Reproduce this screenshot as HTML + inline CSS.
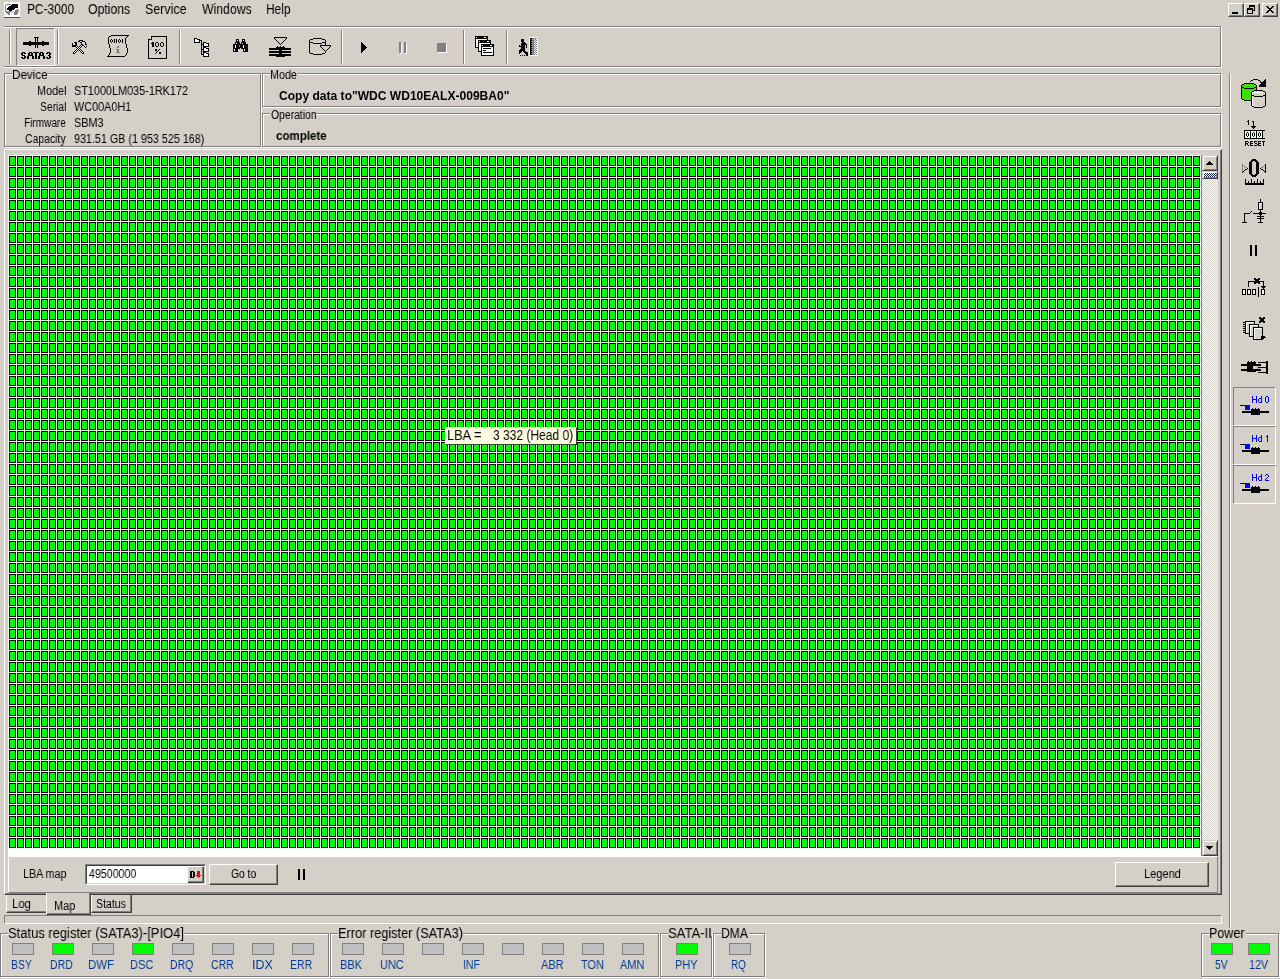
<!DOCTYPE html>
<html><head><meta charset="utf-8"><title>PC-3000</title>
<style>
*{margin:0;padding:0;box-sizing:border-box}
html,body{width:1280px;height:979px;overflow:hidden;background:#D4D0C8;font-family:"Liberation Sans",sans-serif;font-size:12px;color:#000}
.a{position:absolute}
.t{position:absolute;white-space:pre;line-height:1;will-change:transform}
.sep{position:absolute;width:2px;border-left:1px solid #808080;border-right:1px solid #fff}
svg{position:absolute;shape-rendering:crispEdges;overflow:visible}
.led{position:absolute;width:22px;height:12px;border:1px solid #808080;background:#C0C0C0}
.led.on{background:#00FF00}
.btn{border-top:1px solid #fff;border-left:1px solid #fff;border-right:1px solid #404040;border-bottom:1px solid #404040;box-shadow:inset -1px -1px 0 #808080;background:#D4D0C8}
.sbtn{width:16px;height:16px;border-top:1px solid #D4D0C8;border-left:1px solid #D4D0C8;border-right:1px solid #404040;border-bottom:1px solid #404040;box-shadow:inset 1px 1px 0 #fff,inset -1px -1px 0 #808080;background:#D4D0C8}
.tab{border-left:1px solid #fff;border-right:1px solid #404040;border-bottom:1px solid #404040;box-shadow:inset -1px -1px 0 #808080;background:#D4D0C8}
</style></head><body>

<div class="a btn" style="left:1228px;top:3px;width:16px;height:14px"></div>
<div class="a btn" style="left:1244px;top:3px;width:16px;height:14px"></div>
<div class="a btn" style="left:1262px;top:3px;width:16px;height:14px"></div>
<svg style="left:1228px;top:3px" width="16" height="14"><path fill="#000" d="M4 9h6v2h-6z"/></svg>
<svg style="left:1244px;top:3px" width="16" height="14"><path fill="#000" d="M5 2h6v2h-6zM5 4h1v1h-1zM10 4h1v4h-1zM9 7h1v1h-1zM3 5h6v2h-6zM3 7h1v4h-1zM8 7h1v4h-1zM3 10h6v1h-6z"/></svg>
<svg style="left:1262px;top:3px" width="16" height="14"><path fill="#000" d="M4 3h2v1h-2zM10 3h2v1h-2zM5 4h2v1h-2zM9 4h2v1h-2zM6 5h4v1h-4zM7 6h2v1h-2zM6 7h4v1h-4zM5 8h2v1h-2zM9 8h2v1h-2zM4 9h2v1h-2zM10 9h2v1h-2z"/></svg>
<div class="a" style="left:4px;top:26px;width:1217px;height:1px;background:#808080"></div>
<div class="a" style="left:4px;top:27px;width:1218px;height:1px;background:#fff"></div>
<div class="a" style="left:4px;top:66px;width:1217px;height:1px;background:#808080"></div>
<div class="a" style="left:4px;top:67px;width:1218px;height:1px;background:#fff"></div>
<div class="a" style="left:1220px;top:26px;width:1px;height:41px;background:#808080"></div>
<div class="a" style="left:1221px;top:26px;width:1px;height:42px;background:#fff"></div>
<div class="sep" style="left:9px;top:30px;height:34px"></div>
<div class="sep" style="left:57px;top:30px;height:34px"></div>
<div class="sep" style="left:179px;top:30px;height:34px"></div>
<div class="sep" style="left:341px;top:30px;height:34px"></div>
<div class="sep" style="left:463px;top:30px;height:34px"></div>
<div class="sep" style="left:506px;top:30px;height:34px"></div>
<div class="a" style="left:16px;top:28px;width:39px;height:38px;border-top:1px solid #808080;border-left:1px solid #808080;border-right:1px solid #fff;border-bottom:1px solid #fff"></div>
<svg style="left:16px;top:28px" width="39" height="38"><path fill="#000" d="M7 14h26v3h-26zM13 13h2v5h-2zM26 13h2v5h-2zM18 9h5v1h-5zM19 10h1v10h-1zM21 10h1v10h-1z"/></svg>
<div class="a" style="left:5px;top:74px;width:257px;height:74px;border:1px solid #fff"></div><div class="a" style="left:4px;top:73px;width:257px;height:74px;border:1px solid #808080"></div>
<div class="a" style="left:263px;top:74px;width:959px;height:34px;border:1px solid #fff"></div><div class="a" style="left:262px;top:73px;width:959px;height:34px;border:1px solid #808080"></div>
<div class="a" style="left:263px;top:114px;width:959px;height:34px;border:1px solid #fff"></div><div class="a" style="left:262px;top:113px;width:959px;height:34px;border:1px solid #808080"></div>
<div class="a" style="left:6px;top:894px;width:41px;height:19px;border-left:1px solid #fff;border-bottom:1px solid #404040;box-shadow:inset 0 -1px 0 #808080;background:#D4D0C8"></div>
<div class="a tab" style="left:91px;top:894px;width:41px;height:19px"></div>
<div class="a" style="left:4px;top:149px;width:1218px;height:746px;border-top:1px solid #fff;border-left:1px solid #fff;border-right:1px solid #404040;border-bottom:1px solid #404040"></div>
<div class="a" style="left:5px;top:150px;width:1216px;height:744px;border-right:1px solid #808080;border-bottom:1px solid #808080"></div>
<div class="a tab" style="left:46px;top:893px;width:45px;height:22px"></div>
<div class="a" style="left:8px;top:155px;width:1193px;height:701px;background:#fff"></div>
<svg style="left:9px;top:156px" width="1192" height="693"><defs><pattern id="cp" x="0" y="0" width="8" height="11" patternUnits="userSpaceOnUse"><rect x="0" y="0" width="7" height="10" fill="#000"/><rect x="1" y="1" width="5" height="8" fill="#00FF00"/></pattern></defs><rect x="0" y="0" width="1192" height="693" fill="url(#cp)"/></svg>
<div class="a" style="left:445px;top:427px;width:132px;height:18px;background:#FFFFE1;border-top:1px solid #FFF0F0;border-left:1px solid #FFF0F0;border-right:1px solid #404040;border-bottom:1px solid #404040"></div>
<div class="a" style="left:1201px;top:155px;width:1px;height:701px;background:#808080"></div>
<svg style="left:1202px;top:155px" width="16" height="701"><defs><pattern id="ck" x="0" y="0" width="2" height="2" patternUnits="userSpaceOnUse"><rect width="2" height="2" fill="#fff"/><rect x="1" y="0" width="1" height="1" fill="#D4D0C8"/><rect x="0" y="1" width="1" height="1" fill="#D4D0C8"/></pattern><pattern id="ck2" x="0" y="0" width="2" height="2" patternUnits="userSpaceOnUse"><rect width="2" height="2" fill="#fff"/><rect x="1" y="0" width="1" height="1" fill="#0A246A"/><rect x="0" y="1" width="1" height="1" fill="#0A246A"/></pattern></defs><rect width="16" height="701" fill="url(#ck)"/></svg>
<div class="a sbtn" style="left:1202px;top:155px"></div>
<div class="a sbtn" style="left:1202px;top:171px;height:8px"></div>
<svg style="left:1204px;top:173px" width="12" height="4"><rect width="12" height="4" fill="url(#ck2)"/></svg>
<div class="a sbtn" style="left:1202px;top:840px"></div>
<svg style="left:1202px;top:155px" width="16" height="16"><path d="M7 6h1v1h-1zM6 7h3v1h-3zM5 8h5v1h-5zM4 9h7v1h-7z" fill="#000"/></svg>
<svg style="left:1202px;top:840px" width="16" height="16"><path d="M4 6h7v1h-7zM5 7h5v1h-5zM6 8h3v1h-3zM7 9h1v1h-1z" fill="#000"/></svg>
<div class="a" style="left:8px;top:856px;width:1210px;height:37px;border-top:1px solid #fff;border-left:1px solid #fff;border-right:1px solid #808080;border-bottom:1px solid #808080"></div>
<div class="a" style="left:85px;top:864px;width:121px;height:21px;border-top:1px solid #808080;border-left:1px solid #808080;border-right:1px solid #fff;border-bottom:1px solid #fff"></div>
<div class="a" style="left:86px;top:865px;width:119px;height:19px;border-top:1px solid #404040;border-left:1px solid #404040;border-right:1px solid #D4D0C8;border-bottom:1px solid #D4D0C8;background:#fff"></div>
<div class="a" style="left:188px;top:867px;width:16px;height:16px;border-right:1px solid #404040;border-bottom:1px solid #404040;box-shadow:inset -1px -1px 0 #808080;background:#D4D0C8"></div>
<svg style="left:188px;top:867px" width="16" height="16"><path fill="#000" d="M2 4h4v1h-4zM2 5h2v5h-2zM2 10h4v1h-4zM5 5h2v5h-2z"/><path fill="#f00" d="M9 4h3v4h-3zM8 8h5v1h-5zM9 9h3v1h-3zM10 10h1v1h-1z"/></svg>
<div class="a btn" style="left:209px;top:864px;width:69px;height:21px"></div>
<div class="a" style="left:298px;top:869px;width:2px;height:11px;background:#000"></div>
<div class="a" style="left:303px;top:869px;width:2px;height:11px;background:#000"></div>
<div class="a btn" style="left:1115px;top:862px;width:94px;height:25px"></div>
<div class="a" style="left:4px;top:915px;width:1218px;height:9px;border-top:1px solid #808080;border-left:1px solid #808080;border-right:1px solid #fff;border-bottom:1px solid #fff"></div>
<div class="sep" style="left:1229px;top:73px;height:855px"></div>
<div class="a" style="left:1233px;top:387px;width:43px;height:39px;border-top:1px solid #808080;border-left:1px solid #808080;border-right:1px solid #fff;border-bottom:1px solid #fff"></div>
<div class="a" style="left:1233px;top:426px;width:43px;height:39px;border-top:1px solid #808080;border-left:1px solid #808080;border-right:1px solid #fff;border-bottom:1px solid #fff"></div>
<div class="a" style="left:1233px;top:465px;width:43px;height:39px;border-top:1px solid #808080;border-left:1px solid #808080;border-right:1px solid #fff;border-bottom:1px solid #fff"></div>
<div class="a" style="left:1px;top:934px;width:329px;height:44px;border:1px solid #fff"></div><div class="a" style="left:0px;top:933px;width:329px;height:44px;border:1px solid #808080"></div>
<div class="a" style="left:331px;top:934px;width:329px;height:44px;border:1px solid #fff"></div><div class="a" style="left:330px;top:933px;width:329px;height:44px;border:1px solid #808080"></div>
<div class="a" style="left:661px;top:934px;width:52px;height:44px;border:1px solid #fff"></div><div class="a" style="left:660px;top:933px;width:52px;height:44px;border:1px solid #808080"></div>
<div class="a" style="left:714px;top:934px;width:52px;height:44px;border:1px solid #fff"></div><div class="a" style="left:713px;top:933px;width:52px;height:44px;border:1px solid #808080"></div>
<div class="a" style="left:1202px;top:934px;width:78px;height:44px;border:1px solid #fff"></div><div class="a" style="left:1201px;top:933px;width:78px;height:44px;border:1px solid #808080"></div>
<div class="led" style="left:12px;top:943px"></div>
<div class="led on" style="left:52px;top:943px"></div>
<div class="led" style="left:92px;top:943px"></div>
<div class="led on" style="left:132px;top:943px"></div>
<div class="led" style="left:172px;top:943px"></div>
<div class="led" style="left:212px;top:943px"></div>
<div class="led" style="left:252px;top:943px"></div>
<div class="led" style="left:292px;top:943px"></div>
<div class="led" style="left:342px;top:943px"></div>
<div class="led" style="left:382px;top:943px"></div>
<div class="led" style="left:422px;top:943px"></div>
<div class="led" style="left:462px;top:943px"></div>
<div class="led" style="left:502px;top:943px"></div>
<div class="led" style="left:542px;top:943px"></div>
<div class="led" style="left:582px;top:943px"></div>
<div class="led" style="left:622px;top:943px"></div>
<div class="led on" style="left:676px;top:943px"></div>
<div class="led" style="left:729px;top:943px"></div>
<div class="led on" style="left:1211px;top:943px"></div>
<div class="led on" style="left:1248px;top:943px"></div>
<div class="a" style="left:12px;top:72px;width:35px;height:4px;background:#D4D0C8"></div>
<div class="a" style="left:270px;top:72px;width:27px;height:4px;background:#D4D0C8"></div>
<div class="a" style="left:270px;top:112px;width:46px;height:4px;background:#D4D0C8"></div>
<div class="a" style="left:8px;top:932px;width:176px;height:4px;background:#D4D0C8"></div>
<div class="a" style="left:338px;top:932px;width:125px;height:4px;background:#D4D0C8"></div>
<div class="a" style="left:668px;top:932px;width:44px;height:4px;background:#D4D0C8"></div>
<div class="a" style="left:721px;top:932px;width:28px;height:4px;background:#D4D0C8"></div>
<div class="a" style="left:1209px;top:932px;width:37px;height:4px;background:#D4D0C8"></div>
<svg style="left:4px;top:2px" width="16" height="16"><path fill="#fff" d="M0 0h16v1h-16zM0 1h16v1h-16zM0 2h2v1h-2zM7 2h1v1h-1zM14 2h2v1h-2zM0 3h1v1h-1zM2 3h5v1h-5zM14 3h2v1h-2zM0 4h1v1h-1zM2 4h3v1h-3zM14 4h2v1h-2zM0 5h1v1h-1zM2 5h2v1h-2zM14 5h2v1h-2zM0 6h1v1h-1zM2 6h1v1h-1zM11 6h5v1h-5zM0 7h1v1h-1zM2 7h1v1h-1zM10 7h3v1h-3zM15 7h1v1h-1zM0 8h1v1h-1zM2 8h3v1h-3zM8 8h3v1h-3zM14 8h2v1h-2zM0 9h1v1h-1zM10 9h1v1h-1zM15 9h1v1h-1zM0 10h2v1h-2zM6 10h1v1h-1zM9 10h1v1h-1zM14 10h2v1h-2zM0 11h3v1h-3zM6 11h4v1h-4zM14 11h2v1h-2zM0 12h4v1h-4zM6 12h4v1h-4zM13 12h3v1h-3zM0 13h16v1h-16zM0 14h16v1h-16z"/><path fill="#808080" d="M2 2h5v1h-5zM1 3h1v1h-1zM1 4h1v1h-1zM1 5h1v1h-1zM1 6h1v1h-1zM1 7h1v1h-1zM13 7h2v1h-2zM1 8h1v1h-1zM11 8h3v1h-3zM1 9h6v1h-6zM11 9h4v1h-4zM2 10h4v1h-4zM10 10h4v1h-4zM3 11h3v1h-3zM10 11h4v1h-4zM4 12h2v1h-2zM10 12h3v1h-3z"/><path fill="#000" d="M8 2h6v1h-6zM7 3h7v1h-7zM5 4h9v1h-9zM4 5h10v1h-10zM3 6h8v1h-8zM3 7h7v1h-7zM5 8h3v1h-3z"/><path fill="#c0c0c0" d="M7 9h3v1h-3zM7 10h2v1h-2z"/><path fill="#ff0000" d="M0 15h16v1h-16z"/></svg>
<svg style="left:70px;top:38px" width="20" height="16"><path fill="#000" d="M9 2h4v1h-4zM8 3h2v1h-2zM12 3h3v1h-3zM4 4h3v1h-3zM10 4h2v1h-2zM15 4h1v1h-1zM2 5h1v1h-1zM5 5h2v1h-2zM11 5h1v1h-1zM15 5h1v1h-1zM2 6h1v1h-1zM5 6h2v1h-2zM11 6h2v1h-2zM15 6h2v1h-2zM2 7h5v1h-5zM10 7h1v1h-1zM12 7h2v1h-2zM2 8h4v1h-4zM7 8h1v1h-1zM9 8h1v1h-1zM11 8h1v1h-1zM14 8h1v1h-1zM16 8h1v1h-1zM6 9h1v1h-1zM8 9h1v1h-1zM10 9h1v1h-1zM15 9h1v1h-1zM7 10h1v1h-1zM9 10h1v1h-1zM6 11h1v1h-1zM8 11h1v1h-1zM10 11h1v1h-1zM5 12h1v1h-1zM7 12h1v1h-1zM9 12h1v1h-1zM11 12h1v1h-1zM4 13h1v1h-1zM6 13h1v1h-1zM10 13h1v1h-1zM12 13h1v1h-1zM3 14h1v1h-1zM5 14h1v1h-1zM11 14h1v1h-1zM13 14h1v1h-1zM3 15h2v1h-2zM12 15h2v1h-2z"/><path fill="#D4D0C8" d="M10 3h2v1h-2zM12 4h1v1h-1zM14 4h1v1h-1zM13 5h1v1h-1zM13 6h2v1h-2zM11 7h1v1h-1z"/><path fill="#fff" d="M13 4h1v1h-1zM4 5h1v1h-1zM12 5h1v1h-1zM6 8h1v1h-1zM10 8h1v1h-1zM7 9h1v1h-1zM9 9h1v1h-1zM8 10h1v1h-1zM7 11h1v1h-1zM9 11h1v1h-1zM6 12h1v1h-1zM10 12h1v1h-1zM5 13h1v1h-1zM11 13h1v1h-1zM4 14h1v1h-1zM12 14h1v1h-1z"/></svg>
<svg style="left:104px;top:32px" width="26" height="25"><path fill="#000" d="M7 3h18v1h-18zM5 4h2v1h-2zM23 4h1v1h-1zM4 5h1v1h-1zM22 5h1v1h-1zM4 6h1v1h-1zM21 6h1v1h-1zM4 7h1v1h-1zM7 7h1v1h-1zM10 7h1v1h-1zM12 7h1v1h-1zM15 7h1v1h-1zM18 7h1v1h-1zM21 7h1v1h-1zM4 8h1v1h-1zM6 8h1v1h-1zM8 8h1v1h-1zM10 8h1v1h-1zM12 8h1v1h-1zM14 8h1v1h-1zM16 8h1v1h-1zM18 8h1v1h-1zM21 8h1v1h-1zM4 9h1v1h-1zM6 9h1v1h-1zM8 9h1v1h-1zM10 9h1v1h-1zM12 9h1v1h-1zM14 9h1v1h-1zM16 9h1v1h-1zM18 9h1v1h-1zM21 9h1v1h-1zM4 10h1v1h-1zM7 10h1v1h-1zM10 10h1v1h-1zM12 10h1v1h-1zM15 10h1v1h-1zM18 10h1v1h-1zM21 10h1v1h-1zM4 11h1v1h-1zM21 11h1v1h-1zM5 12h1v1h-1zM22 12h1v1h-1zM5 13h1v1h-1zM22 13h1v1h-1zM5 14h1v1h-1zM22 14h1v1h-1zM5 15h1v1h-1zM22 15h1v1h-1zM6 16h1v1h-1zM23 16h1v1h-1zM6 17h1v1h-1zM23 17h1v1h-1zM6 18h1v1h-1zM23 18h1v1h-1zM6 19h1v1h-1zM23 19h1v1h-1zM6 20h1v1h-1zM23 20h1v1h-1zM5 21h1v1h-1zM22 21h1v1h-1zM5 22h1v1h-1zM22 22h1v1h-1zM4 23h1v1h-1zM21 23h1v1h-1zM3 24h18v1h-18z"/><path fill="#808080" d="M13 14h2v1h-2zM13 15h2v1h-2zM12 17h3v1h-3zM13 18h2v1h-2zM13 19h2v1h-2zM12 20h4v1h-4z"/></svg>
<svg style="left:144px;top:33px" width="23" height="26"><path fill="#000" d="M7 3h16v1h-16zM7 4h1v1h-1zM22 4h1v1h-1zM7 5h1v1h-1zM22 5h1v1h-1zM4 6h4v1h-4zM22 6h1v1h-1zM4 7h1v1h-1zM22 7h1v1h-1zM4 8h1v1h-1zM22 8h1v1h-1zM4 9h1v1h-1zM8 9h2v1h-2zM12 9h2v1h-2zM17 9h2v1h-2zM22 9h1v1h-1zM4 10h1v1h-1zM7 10h3v1h-3zM11 10h1v1h-1zM14 10h1v1h-1zM16 10h1v1h-1zM19 10h1v1h-1zM22 10h1v1h-1zM4 11h1v1h-1zM8 11h2v1h-2zM11 11h1v1h-1zM14 11h1v1h-1zM16 11h1v1h-1zM19 11h1v1h-1zM22 11h1v1h-1zM4 12h1v1h-1zM8 12h2v1h-2zM11 12h1v1h-1zM14 12h1v1h-1zM16 12h1v1h-1zM19 12h1v1h-1zM22 12h1v1h-1zM4 13h1v1h-1zM8 13h2v1h-2zM12 13h2v1h-2zM17 13h2v1h-2zM22 13h1v1h-1zM4 14h1v1h-1zM22 14h1v1h-1zM4 15h1v1h-1zM22 15h1v1h-1zM4 16h1v1h-1zM11 16h2v1h-2zM15 16h1v1h-1zM22 16h1v1h-1zM4 17h1v1h-1zM11 17h2v1h-2zM14 17h1v1h-1zM22 17h1v1h-1zM4 18h1v1h-1zM13 18h1v1h-1zM22 18h1v1h-1zM4 19h1v1h-1zM12 19h1v1h-1zM15 19h2v1h-2zM22 19h1v1h-1zM4 20h1v1h-1zM11 20h1v1h-1zM15 20h2v1h-2zM22 20h1v1h-1zM4 21h1v1h-1zM22 21h1v1h-1zM4 22h1v1h-1zM22 22h1v1h-1zM4 23h1v1h-1zM22 23h1v1h-1zM4 24h1v1h-1zM22 24h1v1h-1zM4 25h19v1h-19z"/><path fill="#fff" d="M6 4h1v1h-1zM6 5h1v1h-1z"/><path fill="#808080" d="M5 5h1v1h-1z"/></svg>
<svg style="left:190px;top:35px" width="20" height="22"><path fill="#000" d="M4 3h3v1h-3zM4 4h1v1h-1zM7 4h3v1h-3zM4 5h1v1h-1zM9 5h3v1h-3zM4 6h1v1h-1zM9 6h1v1h-1zM11 6h1v1h-1zM4 7h6v1h-6zM11 7h1v1h-1zM13 7h3v1h-3zM11 8h1v1h-1zM13 8h1v1h-1zM16 8h3v1h-3zM11 9h3v1h-3zM18 9h1v1h-1zM11 10h1v1h-1zM13 10h1v1h-1zM18 10h1v1h-1zM11 11h1v1h-1zM13 11h6v1h-6zM11 12h1v1h-1zM13 12h3v1h-3zM11 13h1v1h-1zM13 13h1v1h-1zM16 13h3v1h-3zM11 14h3v1h-3zM18 14h1v1h-1zM11 15h1v1h-1zM13 15h1v1h-1zM18 15h1v1h-1zM11 16h1v1h-1zM13 16h6v1h-6zM11 17h1v1h-1zM13 17h3v1h-3zM11 18h1v1h-1zM13 18h1v1h-1zM16 18h3v1h-3zM11 19h3v1h-3zM18 19h1v1h-1zM13 20h1v1h-1zM18 20h1v1h-1zM13 21h6v1h-6z"/><path fill="#fff" d="M5 4h2v1h-2zM5 5h4v1h-4zM5 6h4v1h-4zM14 8h2v1h-2zM14 9h4v1h-4zM14 10h4v1h-4zM14 13h2v1h-2zM14 14h4v1h-4zM14 15h4v1h-4zM14 18h2v1h-2zM14 19h4v1h-4zM14 20h4v1h-4z"/></svg>
<svg style="left:228px;top:34px" width="20" height="18"><path fill="#000" d="M8 5h3v1h-3zM14 5h3v1h-3zM8 6h1v1h-1zM10 6h1v1h-1zM14 6h1v1h-1zM16 6h1v1h-1zM8 7h3v1h-3zM14 7h3v1h-3zM7 8h5v1h-5zM13 8h5v1h-5zM7 9h1v1h-1zM9 9h3v1h-3zM13 9h1v1h-1zM15 9h3v1h-3zM5 10h15v1h-15zM5 11h2v1h-2zM8 11h3v1h-3zM12 11h3v1h-3zM16 11h4v1h-4zM5 12h2v1h-2zM8 12h3v1h-3zM12 12h3v1h-3zM16 12h4v1h-4zM5 13h2v1h-2zM8 13h7v1h-7zM16 13h4v1h-4zM5 14h7v1h-7zM13 14h7v1h-7zM5 15h1v1h-1zM7 15h3v1h-3zM15 15h1v1h-1zM17 15h3v1h-3zM5 16h1v1h-1zM7 16h3v1h-3zM15 16h1v1h-1zM17 16h3v1h-3zM5 17h5v1h-5zM15 17h5v1h-5z"/><path fill="#fff" d="M9 6h1v1h-1zM15 6h1v1h-1zM8 9h1v1h-1zM14 9h1v1h-1zM7 11h1v1h-1zM15 11h1v1h-1zM7 12h1v1h-1zM15 12h1v1h-1zM7 13h1v1h-1zM15 13h1v1h-1zM6 15h1v1h-1zM16 15h1v1h-1zM6 16h1v1h-1zM16 16h1v1h-1z"/><path fill="#808080" d="M11 11h1v1h-1zM11 12h1v1h-1z"/></svg>
<svg style="left:266px;top:34px" width="27" height="23"><path fill="#000" d="M8 3h13v1h-13zM8 4h1v1h-1zM20 4h1v1h-1zM9 5h1v1h-1zM19 5h1v1h-1zM10 6h1v1h-1zM18 6h1v1h-1zM11 7h1v1h-1zM17 7h1v1h-1zM12 8h1v1h-1zM16 8h1v1h-1zM13 9h1v1h-1zM15 9h1v1h-1zM14 10h1v1h-1zM11 12h1v1h-1zM14 12h1v1h-1zM17 12h1v1h-1zM10 13h9v1h-9zM3 14h22v1h-22zM3 15h22v1h-22zM13 16h3v1h-3zM3 17h22v1h-22zM3 18h22v1h-22zM13 19h3v1h-3zM3 20h22v1h-22zM3 21h22v1h-22zM10 22h9v1h-9z"/></svg>
<svg style="left:305px;top:34px" width="26" height="21"><path fill="#000" d="M8 4h9v1h-9zM5 5h3v1h-3zM17 5h3v1h-3zM4 6h1v1h-1zM20 6h1v1h-1zM4 7h1v1h-1zM20 7h1v1h-1zM4 8h4v1h-4zM17 8h4v1h-4zM4 9h1v1h-1zM8 9h9v1h-9zM20 9h1v1h-1zM4 10h1v1h-1zM20 10h1v1h-1zM4 11h1v1h-1zM15 11h11v1h-11zM4 12h1v1h-1zM15 12h1v1h-1zM25 12h1v1h-1zM4 13h1v1h-1zM16 13h1v1h-1zM24 13h1v1h-1zM4 14h1v1h-1zM17 14h1v1h-1zM23 14h1v1h-1zM4 15h1v1h-1zM18 15h1v1h-1zM22 15h1v1h-1zM4 16h1v1h-1zM19 16h1v1h-1zM21 16h1v1h-1zM4 17h1v1h-1zM20 17h1v1h-1zM4 18h1v1h-1zM20 18h1v1h-1zM5 19h3v1h-3zM17 19h3v1h-3zM8 20h9v1h-9z"/></svg>
<svg style="left:356px;top:42px" width="11" height="11"><path fill="#000" d="M5 0h1v1h-1zM5 1h2v1h-2zM5 2h3v1h-3zM5 3h4v1h-4zM5 4h5v1h-5zM5 5h6v1h-6zM5 6h5v1h-5zM5 7h4v1h-4zM5 8h3v1h-3zM5 9h2v1h-2zM5 10h1v1h-1z"/></svg>
<svg style="left:394px;top:38px" width="13" height="16"><path fill="#808080" d="M5 4h2v1h-2zM10 4h2v1h-2zM5 5h2v1h-2zM10 5h2v1h-2zM5 6h2v1h-2zM10 6h2v1h-2zM5 7h2v1h-2zM10 7h2v1h-2zM5 8h2v1h-2zM10 8h2v1h-2zM5 9h2v1h-2zM10 9h2v1h-2zM5 10h2v1h-2zM10 10h2v1h-2zM5 11h2v1h-2zM10 11h2v1h-2zM5 12h2v1h-2zM10 12h2v1h-2zM5 13h2v1h-2zM10 13h2v1h-2zM5 14h2v1h-2zM10 14h2v1h-2z"/><path fill="#fff" d="M7 5h1v1h-1zM12 5h1v1h-1zM7 6h1v1h-1zM12 6h1v1h-1zM7 7h1v1h-1zM12 7h1v1h-1zM7 8h1v1h-1zM12 8h1v1h-1zM7 9h1v1h-1zM12 9h1v1h-1zM7 10h1v1h-1zM12 10h1v1h-1zM7 11h1v1h-1zM12 11h1v1h-1zM7 12h1v1h-1zM12 12h1v1h-1zM7 13h1v1h-1zM12 13h1v1h-1zM7 14h1v1h-1zM12 14h1v1h-1zM6 15h2v1h-2zM11 15h2v1h-2z"/></svg>
<svg style="left:432px;top:38px" width="15" height="15"><path fill="#808080" d="M5 5h9v1h-9zM5 6h9v1h-9zM5 7h9v1h-9zM5 8h9v1h-9zM5 9h9v1h-9zM5 10h9v1h-9zM5 11h9v1h-9zM5 12h9v1h-9zM5 13h9v1h-9z"/><path fill="#fff" d="M14 6h1v1h-1zM14 7h1v1h-1zM14 8h1v1h-1zM14 9h1v1h-1zM14 10h1v1h-1zM14 11h1v1h-1zM14 12h1v1h-1zM14 13h1v1h-1zM6 14h9v1h-9z"/></svg>
<svg style="left:472px;top:33px" width="24" height="24"><path fill="#000" d="M3 3h13v1h-13zM3 4h1v1h-1zM5 4h7v1h-7zM14 4h2v1h-2zM3 5h13v1h-13zM3 6h1v1h-1zM15 6h1v1h-1zM3 7h1v1h-1zM6 7h13v1h-13zM3 8h1v1h-1zM6 8h1v1h-1zM8 8h7v1h-7zM17 8h2v1h-2zM3 9h1v1h-1zM6 9h13v1h-13zM3 10h1v1h-1zM6 10h1v1h-1zM18 10h1v1h-1zM3 11h1v1h-1zM6 11h1v1h-1zM9 11h13v1h-13zM3 12h1v1h-1zM6 12h1v1h-1zM9 12h1v1h-1zM11 12h7v1h-7zM20 12h2v1h-2zM3 13h1v1h-1zM6 13h1v1h-1zM9 13h13v1h-13zM3 14h4v1h-4zM9 14h1v1h-1zM21 14h1v1h-1zM6 15h1v1h-1zM9 15h1v1h-1zM11 15h8v1h-8zM21 15h1v1h-1zM6 16h1v1h-1zM9 16h1v1h-1zM21 16h1v1h-1zM6 17h1v1h-1zM9 17h1v1h-1zM11 17h3v1h-3zM21 17h1v1h-1zM6 18h4v1h-4zM21 18h1v1h-1zM9 19h1v1h-1zM11 19h9v1h-9zM21 19h1v1h-1zM9 20h1v1h-1zM21 20h1v1h-1zM9 21h1v1h-1zM21 21h1v1h-1zM9 22h13v1h-13z"/><path fill="#fff" d="M4 4h1v1h-1zM12 4h2v1h-2zM4 6h11v1h-11zM4 7h2v1h-2zM4 8h2v1h-2zM7 8h1v1h-1zM15 8h2v1h-2zM4 9h2v1h-2zM4 10h2v1h-2zM7 10h11v1h-11zM4 11h2v1h-2zM7 11h2v1h-2zM4 12h2v1h-2zM7 12h2v1h-2zM10 12h1v1h-1zM18 12h2v1h-2zM4 13h2v1h-2zM7 13h2v1h-2zM7 14h2v1h-2zM10 14h11v1h-11zM7 15h2v1h-2zM10 15h1v1h-1zM19 15h2v1h-2zM7 16h2v1h-2zM10 16h11v1h-11zM7 17h2v1h-2zM10 17h1v1h-1zM14 17h7v1h-7zM10 18h11v1h-11zM10 19h1v1h-1zM20 19h1v1h-1zM10 20h11v1h-11zM10 21h11v1h-11z"/></svg>
<svg style="left:514px;top:33px" width="25" height="23"><path fill="#fff" d="M15 4h9v1h-9zM15 5h1v1h-1zM23 5h1v1h-1zM15 6h1v1h-1zM20 6h1v1h-1zM22 6h2v1h-2zM15 7h1v1h-1zM21 7h1v1h-1zM23 7h1v1h-1zM15 8h1v1h-1zM20 8h1v1h-1zM22 8h2v1h-2zM15 9h1v1h-1zM21 9h1v1h-1zM23 9h1v1h-1zM15 10h1v1h-1zM20 10h1v1h-1zM22 10h2v1h-2zM15 11h1v1h-1zM21 11h1v1h-1zM23 11h1v1h-1zM15 12h1v1h-1zM20 12h1v1h-1zM22 12h2v1h-2zM15 13h1v1h-1zM21 13h1v1h-1zM23 13h1v1h-1zM15 14h1v1h-1zM20 14h1v1h-1zM22 14h2v1h-2zM15 15h1v1h-1zM21 15h1v1h-1zM23 15h1v1h-1zM15 16h1v1h-1zM20 16h1v1h-1zM22 16h2v1h-2zM15 17h1v1h-1zM21 17h1v1h-1zM23 17h1v1h-1zM15 18h1v1h-1zM20 18h1v1h-1zM22 18h2v1h-2zM15 19h1v1h-1zM21 19h1v1h-1zM23 19h1v1h-1zM15 20h1v1h-1zM20 20h1v1h-1zM22 20h2v1h-2zM15 21h1v1h-1zM21 21h1v1h-1zM23 21h1v1h-1zM15 22h9v1h-9z"/><path fill="#000" d="M16 5h2v1h-2zM7 6h3v1h-3zM16 6h1v1h-1zM7 7h3v1h-3zM16 7h2v1h-2zM7 8h3v1h-3zM16 8h1v1h-1zM8 9h3v1h-3zM16 9h2v1h-2zM7 10h5v1h-5zM16 10h1v1h-1zM7 11h6v1h-6zM16 11h2v1h-2zM5 12h1v1h-1zM7 12h4v1h-4zM12 12h1v1h-1zM16 12h1v1h-1zM5 13h6v1h-6zM12 13h1v1h-1zM16 13h2v1h-2zM7 14h4v1h-4zM12 14h1v1h-1zM16 14h1v1h-1zM7 15h4v1h-4zM16 15h2v1h-2zM6 16h5v1h-5zM16 16h1v1h-1zM5 17h6v1h-6zM16 17h2v1h-2zM5 18h3v1h-3zM9 18h3v1h-3zM16 18h1v1h-1zM5 19h2v1h-2zM10 19h4v1h-4zM16 19h2v1h-2zM5 20h1v1h-1zM11 20h3v1h-3zM16 20h1v1h-1zM12 21h2v1h-2zM16 21h2v1h-2zM6 22h1v1h-1zM8 22h1v1h-1zM10 22h1v1h-1zM12 22h2v1h-2z"/><path fill="#808080" d="M18 5h5v1h-5zM17 6h3v1h-3zM21 6h1v1h-1zM18 7h3v1h-3zM22 7h1v1h-1zM17 8h3v1h-3zM21 8h1v1h-1zM18 9h3v1h-3zM22 9h1v1h-1zM17 10h3v1h-3zM21 10h1v1h-1zM18 11h3v1h-3zM22 11h1v1h-1zM17 12h3v1h-3zM21 12h1v1h-1zM18 13h3v1h-3zM22 13h1v1h-1zM17 14h3v1h-3zM21 14h1v1h-1zM18 15h3v1h-3zM22 15h1v1h-1zM17 16h3v1h-3zM21 16h1v1h-1zM18 17h3v1h-3zM22 17h1v1h-1zM17 18h3v1h-3zM21 18h1v1h-1zM18 19h3v1h-3zM22 19h1v1h-1zM17 20h3v1h-3zM21 20h1v1h-1zM18 21h3v1h-3zM22 21h1v1h-1z"/></svg>
<svg style="left:1238px;top:76px" width="32" height="32"><path fill="#000" d="M15 3h5v1h-5zM27 3h1v1h-1zM13 4h2v1h-2zM20 4h2v1h-2zM26 4h2v1h-2zM12 5h1v1h-1zM22 5h1v1h-1zM25 5h3v1h-3zM22 6h6v1h-6zM6 7h10v1h-10zM23 7h5v1h-5zM4 8h2v1h-2zM16 8h2v1h-2zM22 8h6v1h-6zM3 9h1v1h-1zM18 9h1v1h-1zM21 9h7v1h-7zM3 10h1v1h-1zM18 10h1v1h-1zM21 10h7v1h-7zM3 11h3v1h-3zM16 11h3v1h-3zM3 12h1v1h-1zM6 12h10v1h-10zM18 12h1v1h-1zM3 13h1v1h-1zM18 13h1v1h-1zM3 14h1v1h-1zM16 14h9v1h-9zM3 15h1v1h-1zM14 15h2v1h-2zM25 15h2v1h-2zM3 16h1v1h-1zM13 16h1v1h-1zM27 16h1v1h-1zM3 17h1v1h-1zM13 17h1v1h-1zM27 17h1v1h-1zM3 18h1v1h-1zM13 18h1v1h-1zM27 18h1v1h-1zM3 19h1v1h-1zM13 19h3v1h-3zM25 19h3v1h-3zM3 20h1v1h-1zM13 20h1v1h-1zM16 20h9v1h-9zM27 20h1v1h-1zM3 21h1v1h-1zM13 21h1v1h-1zM27 21h1v1h-1zM3 22h1v1h-1zM13 22h1v1h-1zM27 22h1v1h-1zM4 23h2v1h-2zM13 23h1v1h-1zM27 23h1v1h-1zM6 24h8v1h-8zM27 24h1v1h-1zM13 25h1v1h-1zM27 25h1v1h-1zM13 26h1v1h-1zM27 26h1v1h-1zM13 27h1v1h-1zM27 27h1v1h-1zM13 28h1v1h-1zM27 28h1v1h-1zM13 29h1v1h-1zM27 29h1v1h-1zM14 30h2v1h-2zM25 30h2v1h-2zM16 31h9v1h-9z"/><path fill="#3CE000" d="M6 8h10v1h-10zM4 9h14v1h-14zM4 10h14v1h-14zM6 11h10v1h-10zM4 12h2v1h-2zM16 12h2v1h-2zM4 13h14v1h-14zM4 14h12v1h-12zM4 15h10v1h-10zM4 16h9v1h-9zM4 17h9v1h-9zM4 18h9v1h-9zM4 19h9v1h-9zM4 20h9v1h-9zM4 21h9v1h-9zM4 22h9v1h-9zM6 23h7v1h-7z"/><path fill="#D4D0C8" d="M16 15h9v1h-9zM25 16h2v1h-2zM15 17h12v1h-12zM15 18h12v1h-12zM16 19h9v1h-9zM15 20h1v1h-1zM25 20h2v1h-2zM15 21h12v1h-12zM15 22h12v1h-12zM15 23h12v1h-12zM15 24h12v1h-12zM15 25h12v1h-12zM15 26h12v1h-12zM15 27h12v1h-12zM15 28h12v1h-12zM16 29h11v1h-11zM16 30h9v1h-9z"/><path fill="#fff" d="M14 16h11v1h-11zM14 17h1v1h-1zM14 18h1v1h-1zM14 20h1v1h-1zM14 21h1v1h-1zM14 22h1v1h-1zM14 23h1v1h-1zM14 24h1v1h-1zM14 25h1v1h-1zM14 26h1v1h-1zM14 27h1v1h-1zM14 28h1v1h-1zM14 29h2v1h-2z"/></svg>
<svg style="left:1240px;top:117px" width="26" height="29"><path fill="#000" d="M8 3h1v1h-1zM7 4h2v1h-2zM12 4h2v1h-2zM8 5h1v1h-1zM13 5h1v1h-1zM8 6h1v1h-1zM13 6h1v1h-1zM8 7h1v1h-1zM13 7h1v1h-1zM13 8h1v1h-1zM11 9h5v1h-5zM12 10h3v1h-3zM13 11h1v1h-1zM4 13h21v1h-21zM4 14h1v1h-1zM10 14h1v1h-1zM16 14h1v1h-1zM22 14h1v1h-1zM4 15h1v1h-1zM7 15h1v1h-1zM10 15h1v1h-1zM13 15h1v1h-1zM16 15h1v1h-1zM19 15h1v1h-1zM22 15h1v1h-1zM4 16h1v1h-1zM6 16h1v1h-1zM8 16h1v1h-1zM10 16h1v1h-1zM12 16h1v1h-1zM14 16h1v1h-1zM16 16h1v1h-1zM18 16h1v1h-1zM20 16h1v1h-1zM22 16h1v1h-1zM4 17h1v1h-1zM6 17h1v1h-1zM8 17h1v1h-1zM10 17h1v1h-1zM12 17h1v1h-1zM14 17h1v1h-1zM16 17h1v1h-1zM18 17h1v1h-1zM20 17h1v1h-1zM22 17h1v1h-1zM4 18h1v1h-1zM6 18h1v1h-1zM8 18h1v1h-1zM10 18h1v1h-1zM12 18h1v1h-1zM14 18h1v1h-1zM16 18h1v1h-1zM18 18h1v1h-1zM20 18h1v1h-1zM22 18h1v1h-1zM4 19h1v1h-1zM7 19h1v1h-1zM10 19h1v1h-1zM13 19h1v1h-1zM16 19h1v1h-1zM19 19h1v1h-1zM22 19h1v1h-1zM4 20h1v1h-1zM10 20h1v1h-1zM16 20h1v1h-1zM22 20h1v1h-1zM4 21h21v1h-21zM5 24h3v1h-3zM10 24h3v1h-3zM14 24h3v1h-3zM18 24h3v1h-3zM22 24h3v1h-3zM5 25h1v1h-1zM8 25h1v1h-1zM10 25h1v1h-1zM14 25h1v1h-1zM18 25h1v1h-1zM23 25h1v1h-1zM5 26h3v1h-3zM10 26h3v1h-3zM15 26h2v1h-2zM18 26h3v1h-3zM23 26h1v1h-1zM5 27h1v1h-1zM7 27h1v1h-1zM10 27h1v1h-1zM17 27h2v1h-2zM23 27h1v1h-1zM5 28h1v1h-1zM8 28h1v1h-1zM10 28h3v1h-3zM14 28h3v1h-3zM18 28h3v1h-3zM23 28h1v1h-1z"/><path fill="#fff" d="M5 14h5v1h-5zM11 14h5v1h-5zM17 14h5v1h-5zM5 15h2v1h-2zM8 15h2v1h-2zM11 15h2v1h-2zM14 15h2v1h-2zM17 15h2v1h-2zM20 15h2v1h-2zM5 16h1v1h-1zM7 16h1v1h-1zM9 16h1v1h-1zM11 16h1v1h-1zM13 16h1v1h-1zM15 16h1v1h-1zM17 16h1v1h-1zM19 16h1v1h-1zM21 16h1v1h-1zM5 17h1v1h-1zM7 17h1v1h-1zM9 17h1v1h-1zM11 17h1v1h-1zM13 17h1v1h-1zM15 17h1v1h-1zM17 17h1v1h-1zM19 17h1v1h-1zM21 17h1v1h-1zM5 18h1v1h-1zM7 18h1v1h-1zM9 18h1v1h-1zM11 18h1v1h-1zM13 18h1v1h-1zM15 18h1v1h-1zM17 18h1v1h-1zM19 18h1v1h-1zM21 18h1v1h-1zM5 19h2v1h-2zM8 19h2v1h-2zM11 19h2v1h-2zM14 19h2v1h-2zM17 19h2v1h-2zM20 19h2v1h-2zM5 20h5v1h-5zM11 20h5v1h-5zM17 20h5v1h-5z"/></svg>
<svg style="left:1238px;top:155px" width="32" height="30"><path fill="#000" d="M14 4h4v1h-4zM13 5h6v1h-6zM12 6h3v1h-3zM17 6h3v1h-3zM11 7h3v1h-3zM18 7h3v1h-3zM11 8h3v1h-3zM18 8h3v1h-3zM11 9h3v1h-3zM18 9h3v1h-3zM27 9h1v1h-1zM11 10h3v1h-3zM18 10h3v1h-3zM27 10h1v1h-1zM11 11h3v1h-3zM18 11h3v1h-3zM27 11h1v1h-1zM11 12h3v1h-3zM18 12h3v1h-3zM27 12h1v1h-1zM9 13h1v1h-1zM11 13h3v1h-3zM18 13h3v1h-3zM22 13h1v1h-1zM27 13h1v1h-1zM7 14h2v1h-2zM11 14h3v1h-3zM18 14h3v1h-3zM23 14h2v1h-2zM27 14h1v1h-1zM6 15h1v1h-1zM11 15h3v1h-3zM18 15h3v1h-3zM25 15h1v1h-1zM27 15h1v1h-1zM5 16h1v1h-1zM11 16h3v1h-3zM18 16h3v1h-3zM26 16h2v1h-2zM4 17h1v1h-1zM11 17h3v1h-3zM18 17h3v1h-3zM27 17h1v1h-1zM11 18h3v1h-3zM18 18h3v1h-3zM12 19h3v1h-3zM17 19h3v1h-3zM13 20h6v1h-6zM14 21h4v1h-4zM7 24h1v1h-1zM13 24h1v1h-1zM19 24h1v1h-1zM25 24h1v1h-1zM7 25h1v1h-1zM13 25h1v1h-1zM19 25h1v1h-1zM25 25h1v1h-1zM7 26h1v1h-1zM10 26h1v1h-1zM13 26h1v1h-1zM16 26h1v1h-1zM19 26h1v1h-1zM22 26h1v1h-1zM25 26h1v1h-1zM7 27h1v1h-1zM10 27h1v1h-1zM13 27h1v1h-1zM16 27h1v1h-1zM19 27h1v1h-1zM22 27h1v1h-1zM25 27h1v1h-1zM7 28h19v1h-19zM7 29h19v1h-19z"/><path fill="#808080" d="M4 9h1v1h-1zM4 10h2v1h-2zM26 10h1v1h-1zM4 11h1v1h-1zM6 11h1v1h-1zM25 11h1v1h-1zM4 12h1v1h-1zM7 12h2v1h-2zM23 12h2v1h-2zM4 13h1v1h-1zM4 14h1v1h-1zM4 15h1v1h-1zM4 16h1v1h-1z"/></svg>
<svg style="left:1238px;top:196px" width="32" height="27"><path fill="#000" d="M22 3h1v1h-1zM22 4h1v1h-1zM22 5h1v1h-1zM20 6h5v1h-5zM20 7h1v1h-1zM24 7h1v1h-1zM20 8h1v1h-1zM24 8h1v1h-1zM20 9h1v1h-1zM24 9h1v1h-1zM20 10h1v1h-1zM24 10h1v1h-1zM20 11h1v1h-1zM24 11h1v1h-1zM20 12h1v1h-1zM24 12h1v1h-1zM20 13h5v1h-5zM22 14h1v1h-1zM13 15h1v1h-1zM22 15h1v1h-1zM12 16h1v1h-1zM21 16h3v1h-3zM6 17h6v1h-6zM15 17h13v1h-13zM6 18h1v1h-1zM21 18h3v1h-3zM6 19h1v1h-1zM22 19h1v1h-1zM6 20h1v1h-1zM19 20h7v1h-7zM6 21h1v1h-1zM22 21h1v1h-1zM6 22h1v1h-1zM19 22h7v1h-7zM6 23h1v1h-1zM22 23h1v1h-1zM6 24h1v1h-1zM22 24h1v1h-1zM6 25h1v1h-1zM22 25h1v1h-1zM4 26h5v1h-5zM20 26h5v1h-5z"/><path fill="#fff" d="M21 7h3v1h-3zM21 8h1v1h-1zM21 9h1v1h-1zM21 10h1v1h-1zM21 11h1v1h-1zM21 12h1v1h-1z"/></svg>
<svg style="left:1238px;top:240px" width="28" height="16"><path fill="#000" d="M12 5h2v1h-2zM17 5h2v1h-2zM12 6h2v1h-2zM17 6h2v1h-2zM12 7h2v1h-2zM17 7h2v1h-2zM12 8h2v1h-2zM17 8h2v1h-2zM12 9h2v1h-2zM17 9h2v1h-2zM12 10h2v1h-2zM17 10h2v1h-2zM12 11h2v1h-2zM17 11h2v1h-2zM12 12h2v1h-2zM17 12h2v1h-2zM12 13h2v1h-2zM17 13h2v1h-2zM12 14h2v1h-2zM17 14h2v1h-2zM12 15h2v1h-2zM17 15h2v1h-2z"/></svg>
<svg style="left:1238px;top:274px" width="32" height="23"><path fill="#000" d="M16 4h2v1h-2zM20 4h2v1h-2zM16 5h6v1h-6zM17 6h4v1h-4zM10 7h16v1h-16zM10 8h1v1h-1zM16 8h6v1h-6zM25 8h1v1h-1zM10 9h1v1h-1zM16 9h2v1h-2zM20 9h2v1h-2zM25 9h1v1h-1zM10 10h1v1h-1zM25 10h1v1h-1zM10 11h1v1h-1zM25 11h1v1h-1zM10 12h1v1h-1zM23 12h5v1h-5zM20 13h1v1h-1zM24 13h3v1h-3zM20 14h1v1h-1zM25 14h1v1h-1zM4 15h4v1h-4zM9 15h4v1h-4zM14 15h4v1h-4zM20 15h1v1h-1zM23 15h4v1h-4zM4 16h1v1h-1zM7 16h1v1h-1zM9 16h1v1h-1zM12 16h1v1h-1zM14 16h1v1h-1zM17 16h1v1h-1zM20 16h1v1h-1zM23 16h1v1h-1zM26 16h1v1h-1zM4 17h1v1h-1zM7 17h1v1h-1zM9 17h1v1h-1zM12 17h1v1h-1zM14 17h1v1h-1zM17 17h1v1h-1zM20 17h1v1h-1zM23 17h1v1h-1zM26 17h1v1h-1zM4 18h1v1h-1zM7 18h1v1h-1zM9 18h1v1h-1zM12 18h1v1h-1zM14 18h1v1h-1zM17 18h1v1h-1zM20 18h1v1h-1zM23 18h1v1h-1zM26 18h1v1h-1zM4 19h1v1h-1zM7 19h1v1h-1zM9 19h1v1h-1zM12 19h1v1h-1zM14 19h1v1h-1zM17 19h1v1h-1zM20 19h1v1h-1zM23 19h1v1h-1zM26 19h1v1h-1zM4 20h4v1h-4zM9 20h4v1h-4zM14 20h4v1h-4zM20 20h1v1h-1zM23 20h4v1h-4zM20 21h1v1h-1zM20 22h1v1h-1z"/><path fill="#fff" d="M5 16h2v1h-2zM10 16h2v1h-2zM15 16h2v1h-2zM24 16h2v1h-2zM5 17h2v1h-2zM10 17h2v1h-2zM15 17h2v1h-2zM24 17h2v1h-2zM5 18h2v1h-2zM10 18h2v1h-2zM15 18h2v1h-2zM24 18h2v1h-2zM5 19h2v1h-2zM10 19h2v1h-2zM15 19h2v1h-2zM24 19h2v1h-2z"/></svg>
<svg style="left:1238px;top:313px" width="32" height="27"><path fill="#000" d="M21 4h2v1h-2zM25 4h2v1h-2zM21 5h6v1h-6zM22 6h4v1h-4zM22 7h4v1h-4zM7 8h10v1h-10zM21 8h6v1h-6zM5 9h3v1h-3zM16 9h1v1h-1zM21 9h2v1h-2zM25 9h2v1h-2zM7 10h1v1h-1zM16 10h1v1h-1zM5 11h3v1h-3zM11 11h10v1h-10zM7 12h1v1h-1zM11 12h1v1h-1zM20 12h1v1h-1zM5 13h3v1h-3zM11 13h1v1h-1zM20 13h1v1h-1zM7 14h1v1h-1zM11 14h1v1h-1zM15 14h10v1h-10zM5 15h3v1h-3zM11 15h1v1h-1zM15 15h1v1h-1zM24 15h1v1h-1zM7 16h1v1h-1zM11 16h1v1h-1zM15 16h1v1h-1zM24 16h1v1h-1zM5 17h3v1h-3zM11 17h1v1h-1zM15 17h1v1h-1zM24 17h1v1h-1zM7 18h1v1h-1zM11 18h1v1h-1zM15 18h1v1h-1zM24 18h1v1h-1zM5 19h3v1h-3zM11 19h1v1h-1zM15 19h1v1h-1zM24 19h1v1h-1zM7 20h5v1h-5zM15 20h1v1h-1zM24 20h1v1h-1zM11 21h1v1h-1zM15 21h1v1h-1zM24 21h1v1h-1zM11 22h1v1h-1zM15 22h1v1h-1zM24 22h1v1h-1zM11 23h5v1h-5zM23 23h4v1h-4zM15 24h1v1h-1zM23 24h5v1h-5zM15 25h1v1h-1zM23 25h3v1h-3zM15 26h10v1h-10z"/><path fill="#fff" d="M8 9h8v1h-8zM8 10h1v1h-1zM8 11h1v1h-1zM8 12h1v1h-1zM12 12h8v1h-8zM8 13h1v1h-1zM12 13h1v1h-1zM8 14h1v1h-1zM12 14h1v1h-1zM8 15h1v1h-1zM12 15h1v1h-1zM16 15h8v1h-8zM8 16h1v1h-1zM12 16h1v1h-1zM16 16h1v1h-1zM8 17h1v1h-1zM12 17h1v1h-1zM16 17h1v1h-1zM8 18h1v1h-1zM12 18h1v1h-1zM16 18h1v1h-1zM8 19h1v1h-1zM12 19h1v1h-1zM16 19h1v1h-1zM12 20h1v1h-1zM16 20h1v1h-1zM12 21h1v1h-1zM16 21h1v1h-1zM12 22h1v1h-1zM16 22h1v1h-1zM16 23h1v1h-1zM16 24h1v1h-1zM16 25h1v1h-1z"/><path fill="#D4D0C8" d="M9 10h7v1h-7zM9 11h2v1h-2zM9 12h2v1h-2zM9 13h2v1h-2zM13 13h7v1h-7zM9 14h2v1h-2zM13 14h2v1h-2zM9 15h2v1h-2zM13 15h2v1h-2zM9 16h2v1h-2zM13 16h2v1h-2zM17 16h7v1h-7zM9 17h2v1h-2zM13 17h2v1h-2zM17 17h7v1h-7zM9 18h2v1h-2zM13 18h2v1h-2zM17 18h7v1h-7zM9 19h2v1h-2zM13 19h2v1h-2zM17 19h7v1h-7zM13 20h2v1h-2zM17 20h7v1h-7zM13 21h2v1h-2zM17 21h7v1h-7zM13 22h2v1h-2zM17 22h7v1h-7zM17 23h6v1h-6zM17 24h6v1h-6zM17 25h6v1h-6z"/></svg>
<svg style="left:1238px;top:358px" width="30" height="16"><path fill="#000" d="M10 3h1v1h-1zM13 3h1v1h-1zM16 3h1v1h-1zM28 3h2v1h-2zM9 4h9v1h-9zM20 4h10v1h-10zM9 5h9v1h-9zM28 5h2v1h-2zM3 6h20v1h-20zM28 6h2v1h-2zM3 7h20v1h-20zM28 7h2v1h-2zM9 8h6v1h-6zM28 8h2v1h-2zM9 9h6v1h-6zM20 9h10v1h-10zM9 10h6v1h-6zM28 10h2v1h-2zM3 11h20v1h-20zM28 11h2v1h-2zM3 12h20v1h-20zM28 12h2v1h-2zM9 13h9v1h-9zM28 13h2v1h-2zM20 14h10v1h-10zM28 15h2v1h-2z"/><path fill="#808080" d="M19 8h1v1h-1zM19 10h1v1h-1z"/></svg>
<svg style="left:1252px;top:396px" width="22" height="7"><path fill="#0000ff" d="M0 0h1v1h-1zM4 0h1v1h-1zM9 0h1v1h-1zM14 0h2v1h-2zM0 1h1v1h-1zM4 1h1v1h-1zM9 1h1v1h-1zM13 1h1v1h-1zM16 1h1v1h-1zM0 2h1v1h-1zM4 2h1v1h-1zM7 2h3v1h-3zM13 2h1v1h-1zM16 2h1v1h-1zM0 3h5v1h-5zM6 3h1v1h-1zM9 3h1v1h-1zM13 3h1v1h-1zM16 3h1v1h-1zM0 4h1v1h-1zM4 4h1v1h-1zM6 4h1v1h-1zM9 4h1v1h-1zM13 4h1v1h-1zM16 4h1v1h-1zM0 5h1v1h-1zM4 5h1v1h-1zM6 5h1v1h-1zM9 5h1v1h-1zM13 5h1v1h-1zM16 5h1v1h-1zM0 6h1v1h-1zM4 6h1v1h-1zM7 6h3v1h-3zM14 6h2v1h-2z"/></svg>
<svg style="left:1233px;top:404px" width="37" height="11"><path fill="#000" d="M7 1h5v1h-5zM19 4h1v1h-1zM22 4h1v1h-1zM25 4h1v1h-1zM18 5h9v1h-9zM18 6h9v1h-9zM9 7h27v1h-27zM9 8h27v1h-27zM18 9h9v1h-9zM18 10h9v1h-9z"/><path fill="#0000ff" d="M12 1h5v1h-5zM12 2h5v1h-5zM12 3h5v1h-5zM12 4h5v1h-5zM12 5h5v1h-5z"/></svg>
<svg style="left:1252px;top:435px" width="22" height="7"><path fill="#0000ff" d="M0 0h1v1h-1zM4 0h1v1h-1zM9 0h1v1h-1zM15 0h1v1h-1zM0 1h1v1h-1zM4 1h1v1h-1zM9 1h1v1h-1zM14 1h2v1h-2zM0 2h1v1h-1zM4 2h1v1h-1zM7 2h3v1h-3zM15 2h1v1h-1zM0 3h5v1h-5zM6 3h1v1h-1zM9 3h1v1h-1zM15 3h1v1h-1zM0 4h1v1h-1zM4 4h1v1h-1zM6 4h1v1h-1zM9 4h1v1h-1zM15 4h1v1h-1zM0 5h1v1h-1zM4 5h1v1h-1zM6 5h1v1h-1zM9 5h1v1h-1zM15 5h1v1h-1zM0 6h1v1h-1zM4 6h1v1h-1zM7 6h3v1h-3zM15 6h1v1h-1z"/></svg>
<svg style="left:1233px;top:443px" width="37" height="11"><path fill="#000" d="M7 1h5v1h-5zM19 4h1v1h-1zM22 4h1v1h-1zM25 4h1v1h-1zM18 5h9v1h-9zM18 6h9v1h-9zM9 7h27v1h-27zM9 8h27v1h-27zM18 9h9v1h-9zM18 10h9v1h-9z"/><path fill="#0000ff" d="M12 1h5v1h-5zM12 2h5v1h-5zM12 3h5v1h-5zM12 4h5v1h-5zM12 5h5v1h-5z"/></svg>
<svg style="left:1252px;top:474px" width="22" height="7"><path fill="#0000ff" d="M0 0h1v1h-1zM4 0h1v1h-1zM9 0h1v1h-1zM14 0h2v1h-2zM0 1h1v1h-1zM4 1h1v1h-1zM9 1h1v1h-1zM13 1h1v1h-1zM16 1h1v1h-1zM0 2h1v1h-1zM4 2h1v1h-1zM7 2h3v1h-3zM16 2h1v1h-1zM0 3h5v1h-5zM6 3h1v1h-1zM9 3h1v1h-1zM15 3h1v1h-1zM0 4h1v1h-1zM4 4h1v1h-1zM6 4h1v1h-1zM9 4h1v1h-1zM14 4h1v1h-1zM0 5h1v1h-1zM4 5h1v1h-1zM6 5h1v1h-1zM9 5h1v1h-1zM13 5h1v1h-1zM0 6h1v1h-1zM4 6h1v1h-1zM7 6h3v1h-3zM13 6h4v1h-4z"/></svg>
<svg style="left:1233px;top:482px" width="37" height="11"><path fill="#000" d="M7 1h5v1h-5zM19 4h1v1h-1zM22 4h1v1h-1zM25 4h1v1h-1zM18 5h9v1h-9zM18 6h9v1h-9zM9 7h27v1h-27zM9 8h27v1h-27zM18 9h9v1h-9zM18 10h9v1h-9z"/><path fill="#0000ff" d="M12 1h5v1h-5zM12 2h5v1h-5zM12 3h5v1h-5zM12 4h5v1h-5zM12 5h5v1h-5z"/></svg>
<svg style="left:19px;top:49px" width="34" height="10"><path fill="#000" d="M3 3h3v1h-3zM10 3h3v1h-3zM14 3h6v1h-6zM21 3h3v1h-3zM28 3h3v1h-3zM2 4h2v1h-2zM5 4h2v1h-2zM9 4h2v1h-2zM12 4h2v1h-2zM16 4h2v1h-2zM20 4h2v1h-2zM23 4h2v1h-2zM27 4h2v1h-2zM30 4h2v1h-2zM2 5h2v1h-2zM9 5h2v1h-2zM12 5h2v1h-2zM16 5h2v1h-2zM20 5h2v1h-2zM23 5h2v1h-2zM30 5h2v1h-2zM3 6h3v1h-3zM9 6h5v1h-5zM16 6h2v1h-2zM20 6h5v1h-5zM29 6h2v1h-2zM5 7h2v1h-2zM8 7h2v1h-2zM13 7h2v1h-2zM16 7h2v1h-2zM19 7h2v1h-2zM24 7h2v1h-2zM30 7h2v1h-2zM2 8h2v1h-2zM5 8h2v1h-2zM8 8h2v1h-2zM13 8h2v1h-2zM16 8h2v1h-2zM19 8h2v1h-2zM24 8h2v1h-2zM27 8h2v1h-2zM30 8h2v1h-2zM3 9h3v1h-3zM8 9h2v1h-2zM13 9h2v1h-2zM16 9h2v1h-2zM19 9h2v1h-2zM24 9h2v1h-2zM28 9h3v1h-3z"/></svg>
<div class="t" id="m1" style="left:27.15px;top:2.00px;font-size:14px;color:#000;transform:scaleX(0.8519);transform-origin:0 0;">PC-3000</div>
<div class="t" id="m2" style="left:88.13px;top:2.00px;font-size:14px;color:#000;transform:scaleX(0.8723);transform-origin:0 0;">Options</div>
<div class="t" id="m3" style="left:145.11px;top:2.00px;font-size:14px;color:#000;transform:scaleX(0.8889);transform-origin:0 0;">Service</div>
<div class="t" id="m4" style="left:202.00px;top:2.00px;font-size:14px;color:#000;transform:scaleX(0.8750);transform-origin:0 0;">Windows</div>
<div class="t" id="m5" style="left:266.15px;top:2.00px;font-size:14px;color:#000;transform:scaleX(0.8519);transform-origin:0 0;">Help</div>
<div class="t" id="g1" style="left:12.03px;top:69.00px;font-size:12px;color:#000;transform:scaleX(0.9714);transform-origin:0 0;">Device</div>
<div class="t" id="g2" style="left:270.10px;top:69.00px;font-size:12px;color:#000;transform:scaleX(0.8966);transform-origin:0 0;">Mode</div>
<div class="t" id="g3" style="left:271.00px;top:109.00px;font-size:12px;color:#000;transform:scaleX(0.8654);transform-origin:0 0;">Operation</div>
<div class="t" id="d1" style="left:37.10px;top:85.00px;font-size:12px;color:#000;transform:scaleX(0.9032);transform-origin:0 0;">Model</div>
<div class="t" id="d2" style="left:40.14px;top:101.00px;font-size:12px;color:#000;transform:scaleX(0.8621);transform-origin:0 0;">Serial</div>
<div class="t" id="d3" style="left:24.16px;top:117.00px;font-size:12px;color:#000;transform:scaleX(0.8367);transform-origin:0 0;">Firmware</div>
<div class="t" id="d4" style="left:25.13px;top:133.00px;font-size:12px;color:#000;transform:scaleX(0.8696);transform-origin:0 0;">Capacity</div>
<div class="t" id="v1" style="left:74.10px;top:85.00px;font-size:12px;color:#000;transform:scaleX(0.9040);transform-origin:0 0;">ST1000LM035-1RK172</div>
<div class="t" id="v2" style="left:74.00px;top:101.00px;font-size:12px;color:#000;transform:scaleX(0.9040);transform-origin:0 0;">WC00A0H1</div>
<div class="t" id="v3" style="left:74.10px;top:117.00px;font-size:12px;color:#000;transform:scaleX(0.9040);transform-origin:0 0;">SBM3</div>
<div class="t" id="v4" style="left:74.10px;top:133.00px;font-size:12px;color:#000;transform:scaleX(0.8958);transform-origin:0 0;">931.51 GB (1 953 525 168)</div>
<div class="t" id="b1" style="left:279.00px;top:90.00px;font-size:12px;color:#000;font-weight:700;transform:scaleX(1.0044);transform-origin:0 0;">Copy data to"WDC WD10EALX-009BA0"</div>
<div class="t" id="b2" style="left:276.00px;top:130.00px;font-size:12px;color:#000;font-weight:700;transform:scaleX(0.9615);transform-origin:0 0;">complete</div>
<div class="t" id="l1" style="left:23.11px;top:868.00px;font-size:12px;color:#000;transform:scaleX(0.8936);transform-origin:0 0;">LBA map</div>
<div class="t" id="l2" style="left:89.00px;top:868.00px;font-size:12px;color:#000;transform:scaleX(0.8868);transform-origin:0 0;">49500000</div>
<div class="t" id="l3" style="left:231.11px;top:868.00px;font-size:12px;color:#000;transform:scaleX(0.8586);transform-origin:0 0;">Go to</div>
<div class="t" id="l4" style="left:1144.08px;top:868.00px;font-size:12px;color:#000;transform:scaleX(0.9211);transform-origin:0 0;">Legend</div>
<div class="t" id="t1" style="left:12.06px;top:898.00px;font-size:12px;color:#000;transform:scaleX(0.9444);transform-origin:0 0;">Log</div>
<div class="t" id="t2" style="left:54.09px;top:900.00px;font-size:12px;color:#000;transform:scaleX(0.9091);transform-origin:0 0;">Map</div>
<div class="t" id="t3" style="left:96.12px;top:898.00px;font-size:12px;color:#000;transform:scaleX(0.8788);transform-origin:0 0;">Status</div>
<div class="t" id="s1" style="left:8.07px;top:926.00px;font-size:14px;color:#000;transform:scaleX(0.9255);transform-origin:0 0;">Status register (SATA3)-[PIO4]</div>
<div class="t" id="s2" style="left:338.09px;top:926.00px;font-size:14px;color:#000;transform:scaleX(0.9111);transform-origin:0 0;">Error register (SATA3)</div>
<div class="t" id="s3" style="left:668.07px;top:926.00px;font-size:14px;color:#000;transform:scaleX(0.9333);transform-origin:0 0;">SATA-II</div>
<div class="t" id="s4" style="left:721.13px;top:926.00px;font-size:14px;color:#000;transform:scaleX(0.8667);transform-origin:0 0;">DMA</div>
<div class="t" id="s5" style="left:1209.10px;top:926.00px;font-size:14px;color:#000;transform:scaleX(0.8974);transform-origin:0 0;">Power</div>
<div class="t" id="tt" style="left:447.08px;top:428.00px;font-size:14px;color:#000;transform:scaleX(0.9142);transform-origin:0 0;">LBA =</div>
<div class="t" id="tt2" style="left:493.14px;top:428.00px;font-size:14px;color:#000;transform:scaleX(0.8587);transform-origin:0 0;">3 332 (Head 0)</div>
<div class="t" id="led_BSY" style="left:11.13px;top:959.00px;font-size:12px;color:rgb(0,60,145);transform:scaleX(0.8696);transform-origin:0 0;">BSY</div>
<div class="t" id="led_DRD" style="left:50.12px;top:959.00px;font-size:12px;color:rgb(0,60,145);transform:scaleX(0.8800);transform-origin:0 0;">DRD</div>
<div class="t" id="led_DWF" style="left:88.21px;top:959.00px;font-size:12px;color:rgb(0,60,145);transform:scaleX(0.9499);transform-origin:0 0;">DWF</div>
<div class="t" id="led_DSC" style="left:130.03px;top:959.00px;font-size:12px;color:rgb(0,60,145);transform:scaleX(0.9195);transform-origin:0 0;">DSC</div>
<div class="t" id="led_DRQ" style="left:170.20px;top:959.00px;font-size:12px;color:rgb(0,60,145);transform:scaleX(0.8739);transform-origin:0 0;">DRQ</div>
<div class="t" id="led_CRR" style="left:210.64px;top:959.00px;font-size:12px;color:rgb(0,60,145);transform:scaleX(0.8739);transform-origin:0 0;">CRR</div>
<div class="t" id="led_IDX" style="left:251.60px;top:959.00px;font-size:12px;color:rgb(0,60,145);transform:scaleX(1.0378);transform-origin:0 0;">IDX</div>
<div class="t" id="led_ERR" style="left:289.58px;top:959.00px;font-size:12px;color:rgb(0,60,145);transform:scaleX(0.8739);transform-origin:0 0;">ERR</div>
<div class="t" id="led_BBK" style="left:340.44px;top:959.00px;font-size:12px;color:rgb(0,60,145);transform:scaleX(0.9176);transform-origin:0 0;">BBK</div>
<div class="t" id="led_UNC" style="left:380.10px;top:959.00px;font-size:12px;color:rgb(0,60,145);transform:scaleX(0.9155);transform-origin:0 0;">UNC</div>
<div class="t" id="led_INF" style="left:462.82px;top:959.00px;font-size:12px;color:rgb(0,60,145);transform:scaleX(0.8739);transform-origin:0 0;">INF</div>
<div class="t" id="led_ABR" style="left:540.56px;top:959.00px;font-size:12px;color:rgb(0,60,145);transform:scaleX(0.9155);transform-origin:0 0;">ABR</div>
<div class="t" id="led_TON" style="left:580.56px;top:959.00px;font-size:12px;color:rgb(0,60,145);transform:scaleX(0.9155);transform-origin:0 0;">TON</div>
<div class="t" id="led_AMN" style="left:620.15px;top:959.00px;font-size:12px;color:rgb(0,60,145);transform:scaleX(0.9119);transform-origin:0 0;">AMN</div>
<div class="t" id="led_PHY" style="left:675.09px;top:959.00px;font-size:12px;color:rgb(0,60,145);transform:scaleX(0.9130);transform-origin:0 0;">PHY</div>
<div class="t" id="led_RQ" style="left:731.18px;top:959.00px;font-size:12px;color:rgb(0,60,145);transform:scaleX(0.8235);transform-origin:0 0;">RQ</div>
<div class="t" id="led_5V" style="left:1215.14px;top:959.00px;font-size:12px;color:rgb(0,60,145);transform:scaleX(0.8571);transform-origin:0 0;">5V</div>
<div class="t" id="led_12V" style="left:1249.10px;top:959.00px;font-size:12px;color:rgb(0,60,145);transform:scaleX(0.9000);transform-origin:0 0;">12V</div>
</body></html>
